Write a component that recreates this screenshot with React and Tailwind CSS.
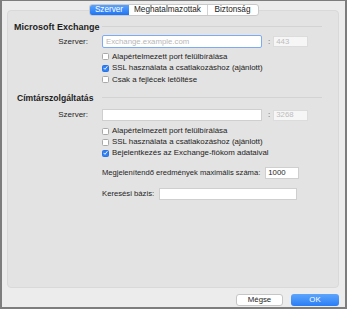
import React from 'react';

const Check = ({ checked }) => (
  <span
    className={`w-[7px] h-[7px] rounded-[1.5px] flex items-center justify-center shrink-0 ${
      checked ? 'bg-[#2f7ff6] border border-[#2a74e0]' : 'bg-white border border-[#a9a9a9]'
    }`}
  >
    {checked && (
      <svg width="6" height="6" viewBox="0 0 6 6">
        <path d="M1 3.2 L2.4 4.6 L5 1.2" fill="none" stroke="white" strokeWidth="1.1" strokeLinecap="round" strokeLinejoin="round" />
      </svg>
    )}
  </span>
);

const CheckRow = ({ checked, label, h = 'h-[11.5px]' }) => (
  <div className={`${h} flex items-center pl-[94px] gap-[3px]`}>
    <Check checked={checked} />
    <span className="text-[7.9px] text-[#222] leading-none">{label}</span>
  </div>
);

const Heading = ({ title, pad, size }) => (
  <div className="h-[10px] flex items-center">
    <div className={`w-[94px] ${pad} ${size} font-bold text-[#1e1e1e] whitespace-nowrap leading-none`}>{title}</div>
    <div className="flex-1 h-px bg-[#d3d3d3] mr-[16px] -mt-[1px]"></div>
  </div>
);

const ServerRow = ({ focused, placeholder, port, mt }) => (
  <div className={`flex items-center ${mt}`}>
    <div className="w-[80px] text-right text-[8px] text-[#262626] leading-none">Szerver:</div>
    <div className="ml-[14px] w-[160px]">
      {focused ? (
        <div className="h-[13px] rounded-[2px] border-[1.5px] border-[#7cabf2] bg-white flex items-center px-[3px]">
          <span className="text-[7.8px] text-[#b8b8b8] leading-none">{placeholder}</span>
        </div>
      ) : (
        <div className="h-[12px] border border-[#cfcfcf] bg-white"></div>
      )}
    </div>
    <span className="ml-[6px] text-[8px] text-[#555] leading-none">:</span>
    <div className="ml-[3px] w-[35px] h-[11px] border border-[#dcdcdc] bg-[#f6f6f6] flex items-center px-[2px]">
      <span className="text-[7.8px] text-[#bdbdbd] leading-none">{port}</span>
    </div>
  </div>
);

export default function App() {
  return (
    <div className="w-[347px] h-[309px] bg-[#ececec] border-l-2 border-r-2 border-b-2 border-t border-[#7d7d7d] flex flex-col font-['Liberation_Sans',Arial,sans-serif] overflow-hidden">
      <div className="pt-[3px] flex justify-center relative z-10">
        <div className="flex h-[12px] rounded-[3px] border border-[#c9c9c9] bg-white overflow-hidden text-[8.2px] leading-none">
          <div className="w-[39px] flex items-center justify-center bg-gradient-to-b from-[#5aa2fb] to-[#1f74f3] text-white">Szerver</div>
          <div className="w-[79px] flex items-center justify-center border-r border-[#d2d2d2] text-[#1a1a1a]">Meghatalmazottak</div>
          <div className="w-[50px] flex items-center justify-center text-[#1a1a1a]">Biztonság</div>
        </div>
      </div>

      <div className="-mt-[6px] ml-[5px] mr-[6px] h-[278px] rounded-[4px] border border-[#d9d9d9] bg-[#e3e3e3] flex flex-col pt-[11px]">
        <Heading title="Microsoft Exchange" pad="pl-[6px]" size="text-[9px]" />
        <ServerRow focused placeholder="Exchange.example.com" port="443" mt="mt-[3px]" />
        <div className="mt-[3px] flex flex-col">
          <CheckRow label="Alapértelmezett port felülbírálása" />
          <CheckRow checked label="SSL használata a csatlakozáshoz (ajánlott)" />
          <CheckRow label="Csak a fejlécek letöltése" />
        </div>

        <div className="mt-[7.5px]">
          <Heading title="Címtárszolgáltatás" pad="pl-[9px]" size="text-[8.6px]" />
        </div>
        <ServerRow port="3268" mt="mt-[6px]" />
        <div className="mt-[4.5px] flex flex-col">
          <CheckRow h="h-[11px]" label="Alapértelmezett port felülbírálása" />
          <CheckRow h="h-[11px]" label="SSL használata a csatlakozáshoz (ajánlott)" />
          <CheckRow h="h-[11px]" checked label="Bejelentkezés az Exchange-fiókom adataival" />
        </div>

        <div className="mt-[8.5px] flex items-center pl-[94px]">
          <span className="text-[7.6px] text-[#1e1e1e] leading-none whitespace-nowrap">Megjelenítendő eredmények maximális száma:</span>
          <div className="ml-[5px] w-[34px] h-[12px] border border-[#cfcfcf] bg-white flex items-center px-[2px]">
            <span className="text-[7.8px] text-[#1e1e1e] leading-none">1000</span>
          </div>
        </div>

        <div className="mt-[9px] flex items-center pl-[94px]">
          <span className="text-[7.7px] text-[#1e1e1e] leading-none whitespace-nowrap">Keresési bázis:</span>
          <div className="ml-[5px] w-[138px] h-[12px] border border-[#cfcfcf] bg-white"></div>
        </div>
      </div>

      <div className="mt-[6px] mr-[6px] flex justify-end gap-[8px]">
        <div className="w-[47px] h-[12px] rounded-[3px] border border-[#c6c6c6] bg-white flex items-center justify-center text-[7.8px] text-[#1e1e1e] leading-none">Mégse</div>
        <div className="w-[48px] h-[12px] rounded-[3px] bg-gradient-to-b from-[#5ca5fb] to-[#2a7cf5] flex items-center justify-center text-[7.8px] text-white leading-none">OK</div>
      </div>
    </div>
  );
}
